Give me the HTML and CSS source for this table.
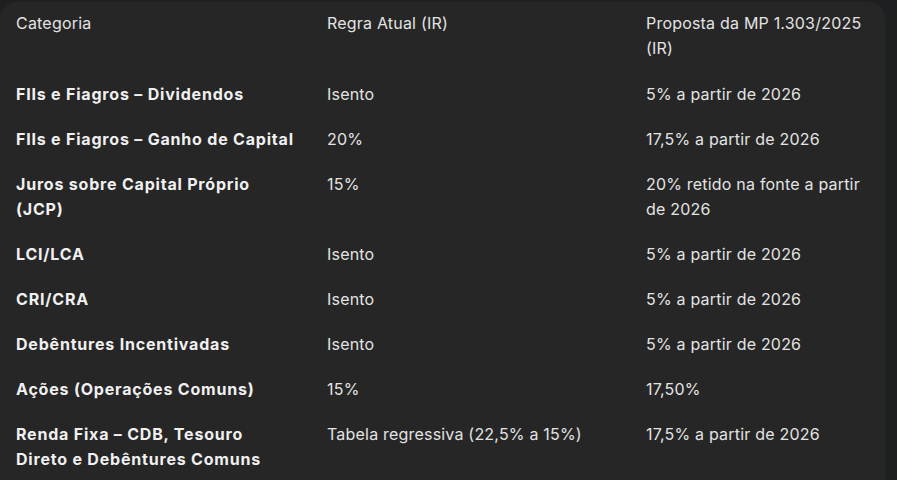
FILE: index.html
```html
<!DOCTYPE html>
<html lang="pt-BR">
<head>
<meta charset="utf-8">
<link rel="stylesheet" href="styles.css">
</head>
<body>
<div class="page">
  <div class="card">
    <table class="grid">
      <colgroup><col class="c1"><col class="c2"><col class="c3"></colgroup>
      <thead>
        <tr><th>Categoria</th><th>Regra Atual (IR)</th><th>Proposta da MP 1.303/2025 (IR)</th></tr>
      </thead>
      <tbody>
        <tr><td class="cat">FIIs e Fiagros – Dividendos</td><td>Isento</td><td>5% a partir de 2026</td></tr>
        <tr><td class="cat">FIIs e Fiagros – Ganho de Capital</td><td>20%</td><td>17,5% a partir de 2026</td></tr>
        <tr><td class="cat">Juros sobre Capital Próprio (JCP)</td><td>15%</td><td>20% retido na fonte a partir de 2026</td></tr>
        <tr><td class="cat">LCI/LCA</td><td>Isento</td><td>5% a partir de 2026</td></tr>
        <tr><td class="cat">CRI/CRA</td><td>Isento</td><td>5% a partir de 2026</td></tr>
        <tr><td class="cat">Debêntures Incentivadas</td><td>Isento</td><td>5% a partir de 2026</td></tr>
        <tr><td class="cat">Ações (Operações Comuns)</td><td>15%</td><td>17,50%</td></tr>
        <tr><td class="cat">Renda Fixa – CDB, Tesouro Direto e Debêntures Comuns</td><td>Tabela regressiva (22,5% a 15%)</td><td>17,5% a partir de 2026</td></tr>
      </tbody>
    </table>
  </div>
</div>
</body>
</html>
```
FILE: styles.css
```css
html, body {
  margin: 0;
  padding: 0;
  background: #1e1f20;
  height: 100%;
  overflow: hidden;
}
.page {
  padding-top: 2px;
}
.card {
  width: 885px;
  background: #262626;
  border-radius: 16px 16px 0 0;
  min-height: 478px;
}
.grid {
  table-layout: fixed;
  border-collapse: collapse;
  width: 885px;
  font-family: Inter, "Open Sans", sans-serif;
  font-size: 16px;
  line-height: 25px;
  letter-spacing: 0.2px;
  color: #e3e3e3;
}
.c1 { width: 311px; }
.c2 { width: 319px; }
.c3 { width: 255px; }
th, td {
  text-align: left;
  vertical-align: top;
  padding: 10px 16px 10px 16px;
}
th {
  font-weight: 400;
  padding-top: 9px;
  padding-bottom: 11px;
}
.cat {
  font-weight: 700;
  letter-spacing: 0.8px;
  color: #f0f0f0;
}
```
